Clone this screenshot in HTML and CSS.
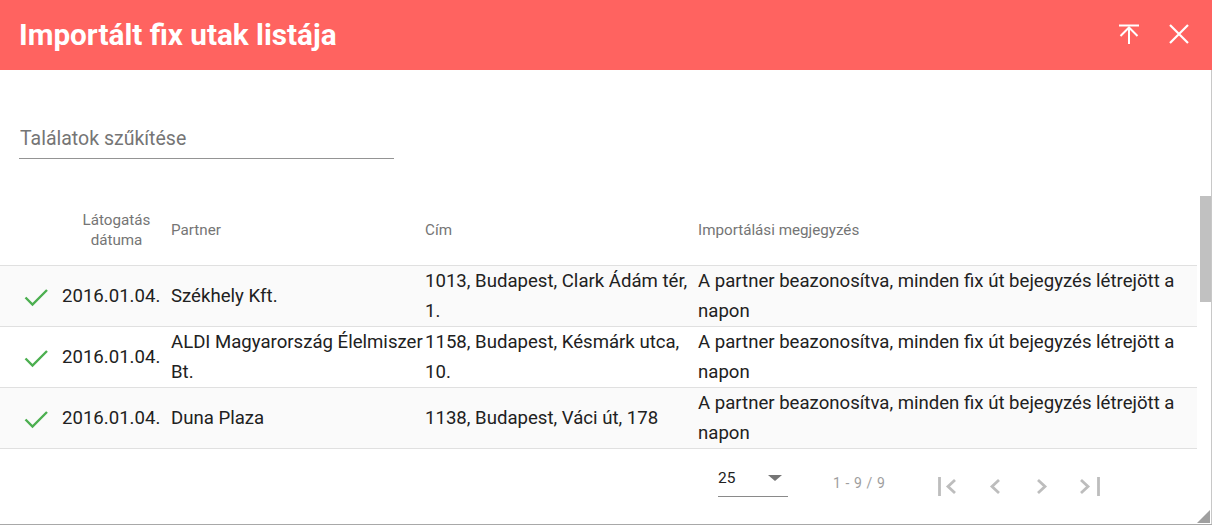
FILE: index.html
```html
<!DOCTYPE html>
<html lang="hu">
<head>
  <meta charset="UTF-8">
  <title>Importált fix utak listája</title>
  <link rel="stylesheet" href="styles.css">
</head>
<body>
  <div class="dialog">
    <div class="dialog-header">
      <div class="dialog-title">Importált fix utak listája</div>
      <div class="header-actions">
        <button class="icon-btn" title="Fel">
          <svg width="24" height="24" viewBox="0 0 24 24" fill="none" stroke="#fff" stroke-width="2">
            <path d="M2 3.5h20"/>
            <path d="M3.5 14l8.5-8.5 8.5 8.5"/>
            <path d="M12 6v16"/>
          </svg>
        </button>
        <button class="icon-btn" title="Bezárás">
          <svg width="24" height="24" viewBox="0 0 24 24" fill="none" stroke="#fff" stroke-width="2.2">
            <path d="M3 3l18 18M21 3L3 21"/>
          </svg>
        </button>
      </div>
    </div>

    <div class="dialog-main">
      <div class="dialog-content">
        <div class="filter">
          <input class="filter-input" type="text" placeholder="Találatok szűkítése">
        </div>

        <table class="grid">
          <colgroup>
            <col class="col-status">
            <col class="col-date">
            <col class="col-partner">
            <col class="col-address">
            <col class="col-note">
          </colgroup>
          <thead>
            <tr>
              <th></th>
              <th class="th-center">Látogatás dátuma</th>
              <th>Partner</th>
              <th>Cím</th>
              <th>Importálási megjegyzés</th>
            </tr>
          </thead>
          <tbody>
            <tr class="odd">
              <td class="status"><svg width="24" height="24" viewBox="0 0 24 24" fill="none" stroke="#4caf50" stroke-width="2.4"><path d="M1.5 12.5l7 7L23 5"/></svg></td>
              <td>2016.01.04.</td>
              <td>Székhely Kft.</td>
              <td>1013, Budapest, Clark Ádám tér, 1.</td>
              <td>A partner beazonosítva, minden fix út bejegyzés létrejött a napon</td>
            </tr>
            <tr>
              <td class="status"><svg width="24" height="24" viewBox="0 0 24 24" fill="none" stroke="#4caf50" stroke-width="2.4"><path d="M1.5 12.5l7 7L23 5"/></svg></td>
              <td>2016.01.04.</td>
              <td>ALDI Magyarország Élelmiszer Bt.</td>
              <td>1158, Budapest, Késmárk utca, 10.</td>
              <td>A partner beazonosítva, minden fix út bejegyzés létrejött a napon</td>
            </tr>
            <tr class="odd">
              <td class="status"><svg width="24" height="24" viewBox="0 0 24 24" fill="none" stroke="#4caf50" stroke-width="2.4"><path d="M1.5 12.5l7 7L23 5"/></svg></td>
              <td>2016.01.04.</td>
              <td>Duna Plaza</td>
              <td>1138, Budapest, Váci út, 178</td>
              <td>A partner beazonosítva, minden fix út bejegyzés létrejött a napon</td>
            </tr>
          </tbody>
        </table>

        <div class="paginator">
          <div class="page-size">
            <span>25</span>
            <span class="caret"></span>
          </div>
          <div class="page-range">1 - 9 / 9</div>
          <div class="page-nav">
            <button class="nav-btn"><svg width="24" height="24" viewBox="0 0 24 24" fill="none" stroke="#bdbdbd" stroke-width="2.8"><path d="M3.5 2v19M19 5l-7 6.5 7 6.5"/></svg></button>
            <button class="nav-btn"><svg width="24" height="24" viewBox="0 0 24 24" fill="none" stroke="#bdbdbd" stroke-width="2.8"><path d="M16 5l-7 6.5 7 6.5"/></svg></button>
            <button class="nav-btn"><svg width="24" height="24" viewBox="0 0 24 24" fill="none" stroke="#bdbdbd" stroke-width="2.8"><path d="M8 5l7 6.5-7 6.5"/></svg></button>
            <button class="nav-btn"><svg width="24" height="24" viewBox="0 0 24 24" fill="none" stroke="#bdbdbd" stroke-width="2.8"><path d="M4 5l7 6.5-7 6.5M21.5 2v19"/></svg></button>
          </div>
        </div>
      </div>

      <div class="scrollbar">
        <div class="scrollbar-thumb"></div>
      </div>
    </div>

    <div class="resize-handle"></div>
  </div>
</body>
</html>
```

FILE: styles.css
```css
body {
  margin: 0;
  background-color: #fff;
  font-family: Roboto, "Liberation Sans", sans-serif;
  color: #212121;
}

.dialog {
  position: relative;
  width: 1212px;
  height: 525px;
  display: flex;
  flex-direction: column;
  box-sizing: border-box;
  border-bottom: 1px solid #a8a8a8;
  overflow: hidden;
}

/* fejléc */
.dialog-header {
  height: 70px;
  flex: none;
  background-color: #ff6360;
  display: flex;
  align-items: center;
  justify-content: space-between;
  padding: 0 21px 0 19px;
}

.dialog-title {
  color: #fff;
  font-weight: bold;
  font-size: 29.7px;
  margin-top: -1px;
}

.header-actions {
  display: flex;
  gap: 26px;
  margin-top: -2px;
}

.icon-btn {
  border: 0;
  background: none;
  padding: 0;
  width: 24px;
  height: 24px;
  cursor: pointer;
}

.icon-btn svg {
  display: block;
}

.dialog-main {
  flex: 1;
  display: flex;
  min-height: 0;
  border-right: 1px solid #c8c8c8;
}

.dialog-content {
  flex: 1;
  min-width: 0;
}

/* szűrő */
.filter {
  margin: 51px 0 0 19px;
  width: 375px;
  border-bottom: 1px solid #949494;
}

.filter-input {
  border: 0;
  outline: none;
  width: 100%;
  height: 37px;
  padding: 0 0 2px 1px;
  font-family: inherit;
  font-size: 19.5px;
  color: #212121;
  background: none;
  box-sizing: border-box;
}

.filter-input::placeholder {
  color: #757575;
}

/* táblázat */
.grid {
  margin-top: 40px;
  width: 1197px;
  border-collapse: collapse;
  table-layout: fixed;
}

.col-status { width: 62px; }
.col-date { width: 109px; }
.col-partner { width: 254px; }
.col-address { width: 273px; }
.col-note { width: 499px; }

.grid th {
  height: 62px;
  padding: 0 0 4px 0;
  text-align: left;
  font-weight: normal;
  font-size: 15.2px;
  line-height: 20px;
  color: #757575;
  border-bottom: 1px solid #e0e0e0;
  vertical-align: middle;
}

.grid th.th-center {
  text-align: center;
}

.grid td {
  height: 60px;
  padding: 0;
  font-size: 18.6px;
  line-height: 30px;
  vertical-align: middle;
  border-bottom: 1px solid #e0e0e0;
}

.grid tr.odd td {
  background-color: #fafafa;
}

.grid td.status {
  padding-left: 24px;
}

.grid td.status svg {
  display: block;
  margin-top: 1px;
}

/* lapozó */
.paginator {
  height: 73px;
  display: flex;
  align-items: center;
  padding-left: 718px;
}

.page-size {
  width: 70px;
  height: 30px;
  border-bottom: 1px solid #8a8a8a;
  display: flex;
  justify-content: space-between;
  font-size: 15.5px;
  line-height: 22px;
  margin-top: -7px;
  box-sizing: border-box;
}

.caret {
  width: 0;
  height: 0;
  border-left: 7px solid transparent;
  border-right: 7px solid transparent;
  border-top: 6px solid #757575;
  margin: 8px 6px 0 0;
}

.page-range {
  margin: -6px 0 0 45px;
  font-size: 14px;
  letter-spacing: 0.6px;
  color: #9e9e9e;
  width: 103px;
}

.page-nav {
  display: flex;
  gap: 23px;
  margin-bottom: -2px;
}

.nav-btn {
  border: 0;
  background: none;
  padding: 0;
  width: 24px;
  height: 24px;
}

.nav-btn svg {
  display: block;
}

/* görgetősáv */
.scrollbar {
  width: 11px;
  flex: none;
  background-color: #fff;
}

.scrollbar-thumb {
  margin-top: 126px;
  height: 106px;
  background-color: #c1c1c1;
}

.resize-handle {
  position: absolute;
  right: 2px;
  bottom: 1px;
  width: 0;
  height: 0;
  border-left: 13px solid transparent;
  border-bottom: 13px solid #a0a0a0;
}
```
